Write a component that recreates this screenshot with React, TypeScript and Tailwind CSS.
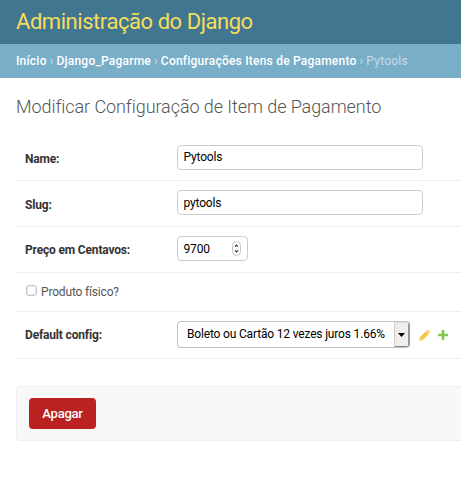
import type { ReactNode } from "react";

function Row({ label, className, labelClass, children }: { label: string; className: string; labelClass: string; children: ReactNode }) {
  return (
    <div className={`flex items-start border-b border-[#eee] pl-[9px] ${className}`}>
      <label className={`w-[152px] shrink-0 text-[12px] leading-[15px] font-bold tracking-[-0.17px] text-[#333] ${labelClass}`}>
        {label}
      </label>
      {children}
    </div>
  );
}

function TextInput({ value, className }: { value: string; className: string }) {
  return (
    <input
      type="text"
      defaultValue={value}
      className={`h-[25px] w-[246px] rounded-[4px] border border-[#ccc] bg-white px-[5.5px] text-[12px] leading-[15px] tracking-[-0.17px] text-black outline-none ${className}`}
    />
  );
}

export default function App() {
  return (
    <div className="h-[478px] w-[461px] overflow-hidden bg-white font-['Roboto',sans-serif] whitespace-nowrap">
      <header className="flex h-[44px] items-center bg-[#417690] pl-4">
        <h1 className="text-[22px] leading-[26px] font-normal tracking-[-0.45px] text-[#f5dd5d]">Administração do Django</h1>
      </header>
      <nav className="flex h-[34px] items-center gap-[3px] bg-[#79aec8] pl-4 text-[12px] leading-[16px] tracking-[0.22px] text-[#c4dce8]">
        <a className="font-medium text-white">Início</a>
        <span>›</span>
        <a className="font-medium text-white">Django_Pagarme</a>
        <span>›</span>
        <a className="font-medium text-white">Configurações Itens de Pagamento</a>
        <span>›</span>
        <span>Pytools</span>
      </nav>
      <main className="pl-4">
        <h2 className="pt-[17px] text-[18px] leading-[24px] font-light tracking-[-0.07px] text-[#555]">
          Modificar Configuração de Item de Pagamento
        </h2>
        <div className="mt-[16px]">
          <Row label="Name:" className="h-[46px] pt-[10px]" labelClass="pt-[7px]">
            <TextInput value="Pytools" className="pb-[1px]" />
          </Row>
          <Row label="Slug:" className="h-[46px] pt-[9px]" labelClass="pt-[8px]">
            <TextInput value="pytools" className="pt-[1px]" />
          </Row>
          <Row label="Preço em Centavos:" className="h-[46px] pt-[9px]" labelClass="pt-[7px]">
            <div className="flex h-[25px] w-[71px] items-center justify-between rounded-[4px] border border-[#ccc] pr-[6px] pl-[5.5px]">
              <span className="pt-[2px] text-[12px] leading-[15px] tracking-[-0.17px] text-black">9700</span>
              <svg width="9" height="15" viewBox="0 0 9 15" fill="none">
                <rect x=".5" y=".5" width="8" height="14" rx="4" stroke="#c4c4c4" />
                <path d="M2.9 5.6 4.5 4l1.6 1.6M2.9 9.4 4.5 11l1.6-1.6" stroke="#333" strokeWidth="1.1" />
              </svg>
            </div>
          </Row>
          <div className="flex h-[39px] items-center gap-[4px] border-b border-[#eee] pl-[10px]">
            <span className="mb-[3px] h-[11px] w-[11px] rounded-[3px] border border-[#c6c6c6] bg-white shadow-[inset_0_0_0_1px_#e8e8e8]" />
            <label className="pt-px text-[12px] leading-[15px] tracking-[-0.17px] text-[#555]">Produto físico?</label>
          </div>
          <Row label="Default config:" className="h-[47px] pt-[9px]" labelClass="pt-[7px]">
            <div className="flex h-[27px] w-[233px] items-stretch justify-between overflow-hidden rounded-[4px] border border-[#c4c4c4] border-r-[#999]">
              <span className="pl-[9px] text-[12px] leading-[25px] tracking-[-0.17px] text-black">Boleto ou Cartão 12 vezes juros 1.66%</span>
              <span className="flex w-[15px] items-center justify-center border border-t-[#ddd] border-r-[#999] border-b-[#888] border-l-[#ccc] bg-[#eee]">
                <svg width="7" height="4" viewBox="0 0 7 4">
                  <path d="M0 0h7L3.5 4z" fill="#000" />
                </svg>
              </span>
            </div>
            <svg className="mt-[9px] ml-[9px]" width="11" height="11" viewBox="0 0 11 11">
              <path d="M.3 10.7.8 7.2 6.7 1.6 9.6 4.3 3.8 10.1Z" fill="#efb80b" fillOpacity=".8" />
              <path d="m7.2 1.1.7-.7q.7-.6 1.4 0l1.2 1.2q.6.7 0 1.4l-.5.8Z" fill="#efb80b" fillOpacity=".8" />
              <path d="m1.3 8 1.8 1.8" stroke="#fff" strokeWidth=".6" />
            </svg>
            <svg className="mt-[9px] ml-[8px]" width="10" height="10" viewBox="0 0 10 10">
              <path d="M3.7 0h2.6v3.7H10v2.6H6.3V10H3.7V6.3H0V3.7h3.7Z" fill="#84c94b" />
            </svg>
          </Row>
        </div>
        <div className="mt-[27px] h-[55px] rounded-l-[4px] border border-r-0 border-[#eee] bg-[#f8f8f8] pt-[11px] pl-[12px]">
          <button className="block h-[31px] w-[67px] rounded-[4px] bg-[#ba2121] text-[13px] leading-[31px] font-medium tracking-[-0.25px] text-white">
            Apagar
          </button>
        </div>
      </main>
    </div>
  );
}
